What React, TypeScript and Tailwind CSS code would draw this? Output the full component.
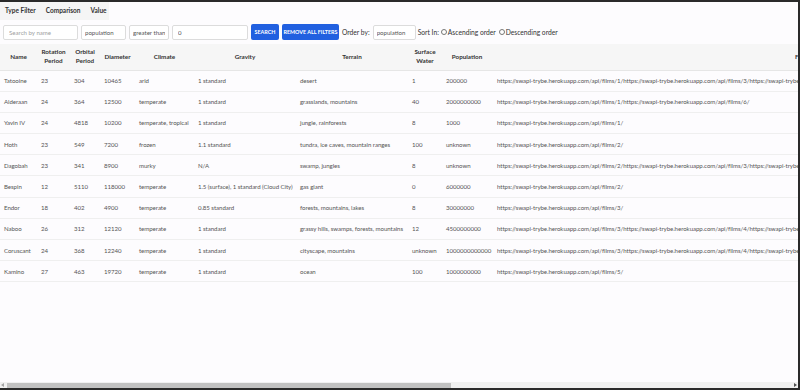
import { useState } from 'react'

const base = 'https://swapi-trybe.herokuapp.com/api/films/'

const films = (ids: number[]) => ids.map((id) => `${base}${id}/`).join('')

const planets = [
  { name: 'Tatooine', rotation: '23', orbital: '304', diameter: '10465', climate: 'arid', gravity: '1 standard', terrain: 'desert', water: '1', population: '200000', films: [1, 3, 4, 5, 6], created: '2014-12-09T13:50:49.641000Z', edited: '2014-12-20T20:58:18.411000Z', id: 1 },
  { name: 'Alderaan', rotation: '24', orbital: '364', diameter: '12500', climate: 'temperate', gravity: '1 standard', terrain: 'grasslands, mountains', water: '40', population: '2000000000', films: [1, 6], created: '2014-12-10T11:35:48.479000Z', edited: '2014-12-20T20:58:18.420000Z', id: 2 },
  { name: 'Yavin IV', rotation: '24', orbital: '4818', diameter: '10200', climate: 'temperate, tropical', gravity: '1 standard', terrain: 'jungle, rainforests', water: '8', population: '1000', films: [1], created: '2014-12-10T11:37:19.144000Z', edited: '2014-12-20T20:58:18.421000Z', id: 3 },
  { name: 'Hoth', rotation: '23', orbital: '549', diameter: '7200', climate: 'frozen', gravity: '1.1 standard', terrain: 'tundra, ice caves, mountain ranges', water: '100', population: 'unknown', films: [2], created: '2014-12-10T11:39:13.934000Z', edited: '2014-12-20T20:58:18.423000Z', id: 4 },
  { name: 'Dagobah', rotation: '23', orbital: '341', diameter: '8900', climate: 'murky', gravity: 'N/A', terrain: 'swamp, jungles', water: '8', population: 'unknown', films: [2, 3, 6], created: '2014-12-10T11:42:22.590000Z', edited: '2014-12-20T20:58:18.425000Z', id: 5 },
  { name: 'Bespin', rotation: '12', orbital: '5110', diameter: '118000', climate: 'temperate', gravity: '1.5 (surface), 1 standard (Cloud City)', terrain: 'gas giant', water: '0', population: '6000000', films: [2], created: '2014-12-10T11:43:55.240000Z', edited: '2014-12-20T20:58:18.427000Z', id: 6 },
  { name: 'Endor', rotation: '18', orbital: '402', diameter: '4900', climate: 'temperate', gravity: '0.85 standard', terrain: 'forests, mountains, lakes', water: '8', population: '30000000', films: [3], created: '2014-12-10T11:50:29.349000Z', edited: '2014-12-20T20:58:18.429000Z', id: 7 },
  { name: 'Naboo', rotation: '26', orbital: '312', diameter: '12120', climate: 'temperate', gravity: '1 standard', terrain: 'grassy hills, swamps, forests, mountains', water: '12', population: '4500000000', films: [3, 4, 5, 6], created: '2014-12-10T11:52:31.066000Z', edited: '2014-12-20T20:58:18.430000Z', id: 8 },
  { name: 'Coruscant', rotation: '24', orbital: '368', diameter: '12240', climate: 'temperate', gravity: '1 standard', terrain: 'cityscape, mountains', water: 'unknown', population: '1000000000000', films: [3, 4, 5, 6], created: '2014-12-10T11:54:13.921000Z', edited: '2014-12-20T20:58:18.432000Z', id: 9 },
  { name: 'Kamino', rotation: '27', orbital: '463', diameter: '19720', climate: 'temperate', gravity: '1 standard', terrain: 'ocean', water: '100', population: '1000000000', films: [5], created: '2014-12-10T12:45:06.577000Z', edited: '2014-12-20T20:58:18.434000Z', id: 10 },
]

const headers: { label: [string, string?]; w: string }[] = [
  { label: ['Name'], w: 'w-[37px]' },
  { label: ['Rotation', 'Period'], w: 'w-[33px]' },
  { label: ['Orbital', 'Period'], w: 'w-[30px]' },
  { label: ['Diameter'], w: 'w-[35px]' },
  { label: ['Climate'], w: 'w-[59px]' },
  { label: ['Gravity'], w: 'w-[102px]' },
  { label: ['Terrain'], w: 'w-[112px]' },
  { label: ['Surface', 'Water'], w: 'w-[34px]' },
  { label: ['Population'], w: 'w-[50px]' },
  { label: ['Films'], w: 'w-[621px]' },
  { label: ['Created'], w: 'w-[110px]' },
  { label: ['Edited'], w: 'w-[110px]' },
  { label: ['URL'], w: 'w-[144px]' },
]

const inputCls =
  'h-[15px] rounded-[2px] border border-[#dcdcdc] bg-white px-[3px] text-[6.1px] text-[#555] outline-none placeholder:text-[#a0a0a0]'

const App = () => {
  const [order, setOrder] = useState('')

  return (
    <div
      className="flex h-[390px] w-[800px] flex-col overflow-hidden border-t-2 border-r-2 border-b-2 border-[#2a2a2a] bg-[#fdfcfe] text-[#555]"
      style={{ fontFamily: 'Lato, "Open Sans", sans-serif' }}
    >
      <div className="flex">
        <div className="flex h-[18px] items-center gap-[10px] bg-[#f5f5f5] pr-[2px] pl-[5px] text-[6.5px] font-bold text-[#333]">
          <span>Type Filter</span>
          <span>Comparison</span>
          <span>Value</span>
        </div>
      </div>

      <div className="mt-[4px] flex items-center gap-[3px] pl-[3px] text-[6.7px] text-[#333]">
        <input className={`${inputCls} w-[75px] px-[5px]`} placeholder="Search by name" />
        <input className={`${inputCls} w-[45px]`} defaultValue="population" />
        <input className={`${inputCls} w-[40px] px-[2px]`} defaultValue="greater than" />
        <input className={`${inputCls} w-[76px] px-[5px]`} defaultValue="0" />
        <button className="h-[16px] w-[28px] rounded-[2px] bg-[#2160e0] text-[5.4px] font-bold text-white">
          SEARCH
        </button>
        <button className="h-[16px] w-[57px] rounded-[2px] bg-[#2160e0] text-[5.4px] font-bold text-white">
          REMOVE ALL FILTERS
        </button>
        <span>Order by:</span>
        <input className={`${inputCls} w-[43px]`} defaultValue="population" />
        <span className="ml-[-1px]">Sort In:</span>
        <label className="ml-[-1px] flex items-center gap-[1px]">
          <input
            type="radio"
            name="sort"
            checked={order === 'asc'}
            onChange={() => setOrder('asc')}
            className="m-0 h-[6px] w-[6px]"
          />
          Ascending order
        </label>
        <label className="flex items-center gap-[1px]">
          <input
            type="radio"
            name="sort"
            checked={order === 'desc'}
            onChange={() => setOrder('desc')}
            className="m-0 h-[6px] w-[6px]"
          />
          Descending order
        </label>
      </div>

      <div className="mt-[4px] flex-1 overflow-hidden">
        <table className="w-[1477px] table-fixed border-collapse text-[6.1px] tracking-[-0.05px]">
          <thead>
            <tr className="h-[26px] border-b border-[#e6e6e6] bg-[#f6f6f6] text-[6.3px] tracking-normal text-[#333]">
              {headers.map((h) => (
                <th key={h.label[0]} className={`${h.w} px-[2px] text-center leading-[8.5px] font-bold`}>
                  {h.label[0]}
                  {h.label[1] && (
                    <>
                      <br />
                      {h.label[1]}
                    </>
                  )}
                </th>
              ))}
            </tr>
          </thead>
          <tbody>
            {planets.map((p) => (
              <tr key={p.name} className="h-[21.2px] border-b border-[#efefef]">
                <td className="pl-[4px] whitespace-nowrap">{p.name}</td>
                <td className="pl-[4px]">{p.rotation}</td>
                <td className="pl-[4px]">{p.orbital}</td>
                <td className="pl-[4px]">{p.diameter}</td>
                <td className="pl-[4px] whitespace-nowrap">{p.climate}</td>
                <td className="pl-[4px] whitespace-nowrap">{p.gravity}</td>
                <td className="pl-[4px] whitespace-nowrap">{p.terrain}</td>
                <td className="pl-[4px]">{p.water}</td>
                <td className="pl-[4px]">{p.population}</td>
                <td className="pl-[5px] whitespace-nowrap">{films(p.films)}</td>
                <td className="pl-[4px] whitespace-nowrap">{p.created}</td>
                <td className="pl-[4px] whitespace-nowrap">{p.edited}</td>
                <td className="pl-[4px] whitespace-nowrap">{`https://swapi-trybe.herokuapp.com/api/planets/${p.id}/`}</td>
              </tr>
            ))}
          </tbody>
        </table>
      </div>

      {/* horizontal scrollbar */}
      <div className="flex h-[6px] items-center bg-[#f0f0f0] px-[1px]">
        <span className="h-0 w-0 border-y-[2px] border-r-[3px] border-y-transparent border-r-[#a3a3a3]" />
        <div className="ml-[3px] h-[5px] w-[444px] bg-[#c1c1c1]" />
        <span className="ml-auto h-0 w-0 border-y-[2px] border-l-[3px] border-y-transparent border-l-[#505050]" />
      </div>
    </div>
  )
}

export default App
